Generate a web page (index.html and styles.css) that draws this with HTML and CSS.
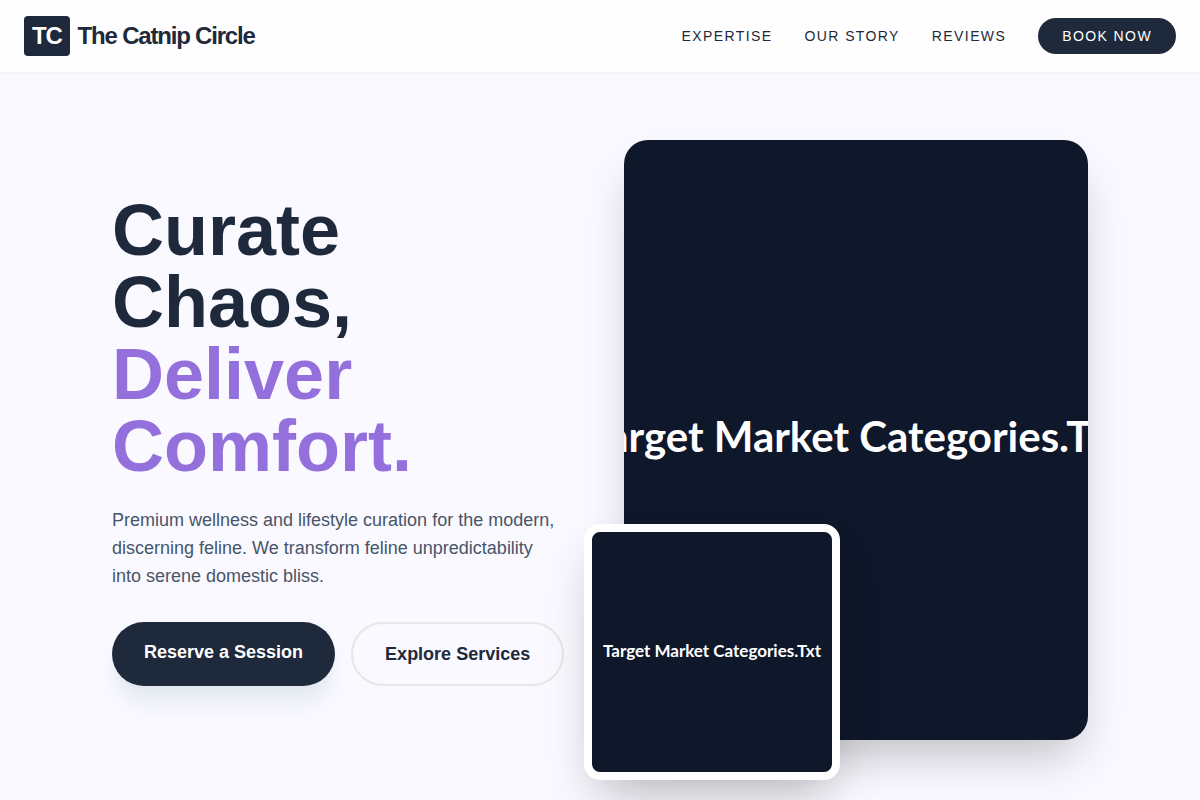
FILE: index.html
```html
<!DOCTYPE html>
<html lang="en">
<head>
<meta charset="utf-8">
<meta name="viewport" content="width=device-width, initial-scale=1">
<title>The Catnip Circle</title>
<link rel="stylesheet" href="styles.css">
</head>
<body>
<header class="site-header">
  <a class="brand" href="#"><span class="brand-mark">TC</span><span>The Catnip Circle</span></a>
  <nav class="site-nav" aria-label="Main">
    <a class="nav-link" href="#expertise">Expertise</a>
    <a class="nav-link" href="#story">Our Story</a>
    <a class="nav-link" href="#reviews">Reviews</a>
    <a class="nav-link nav-cta" href="#book">Book Now</a>
  </nav>
</header>
<main class="hero">
  <div class="hero-grid">
    <section class="hero-copy">
      <h1 class="hero-title">Curate Chaos, <span class="accent">Deliver Comfort.</span></h1>
      <p class="hero-text">Premium wellness and lifestyle curation for the modern, discerning feline. We transform feline unpredictability into serene domestic bliss.</p>
      <div class="actions">
        <a class="button button-primary" href="#book">Reserve a Session</a>
        <a class="button button-outline" href="#expertise">Explore Services</a>
      </div>
    </section>
    <div class="media">
      <div class="media-main"><span>Target Market Categories.Txt</span></div>
      <div class="media-inset"><span>Target Market Categories.Txt</span></div>
    </div>
  </div>
</main>
</body>
</html>
```
FILE: styles.css
```css
*,
*::before,
*::after {
  box-sizing: border-box;
}

body {
  margin: 0;
  background: #faf9ff;
  color: #1e293b;
  font-family: "Liberation Sans", Arial, sans-serif;
  overflow-x: hidden;
}

a {
  color: inherit;
  text-decoration: none;
}

.site-header {
  position: fixed;
  top: 0;
  left: 0;
  right: 0;
  z-index: 10;
  display: flex;
  align-items: center;
  justify-content: space-between;
  padding: 16px 24px;
  background: #fefefe;
  border-bottom: 2px solid #f3f3f8;
}

.brand {
  display: flex;
  align-items: center;
  gap: 8px;
  font-size: 24px;
  font-weight: 700;
  line-height: 32px;
  letter-spacing: -0.05em;
}

.brand-mark {
  padding: 4px 8px;
  border-radius: 4px;
  background: #1e293b;
  color: #fff;
}

.site-nav {
  display: flex;
  align-items: center;
  gap: 32px;
}

.nav-link {
  font-size: 14px;
  line-height: 20px;
  letter-spacing: 0.1em;
  text-transform: uppercase;
}

.nav-cta {
  padding: 8px 24px;
  border-radius: 18px;
  background: #1e293b;
  color: #fff;
}

.hero {
  display: flex;
  align-items: center;
  justify-content: center;
  min-height: 100vh;
  padding: 80px 112px 0;
}

.hero-grid {
  display: grid;
  grid-template-columns: repeat(2, minmax(0, 1fr));
  align-items: center;
  gap: 48px;
  width: 100%;
  max-width: 1232px;
}

.hero-title {
  margin: 0 0 24px;
  font-size: 72px;
  font-weight: 700;
  line-height: 1;
}

.accent {
  color: #9370db;
}

.hero-text {
  max-width: 448px;
  margin: 0 0 32px;
  color: #475569;
  font-size: 18px;
  line-height: 28px;
}

.actions {
  display: flex;
  gap: 16px;
}

.button {
  padding: 16px 32px;
  border-radius: 32px;
  font-size: 18px;
  font-weight: 700;
  line-height: 28px;
  white-space: nowrap;
}

.button-primary {
  background: #1e293b;
  color: #fff;
  box-shadow: 0 20px 25px -5px #e2e8f0, 0 8px 10px -6px #e2e8f0;
}

.button-outline {
  border: 2px solid #e5e7eb;
}

.media {
  position: relative;
}

.media-main,
.media-inset {
  display: flex;
  align-items: center;
  justify-content: center;
  overflow: hidden;
  background: #0f172a;
  box-shadow: 0 25px 50px -12px rgba(0, 0, 0, 0.25);
  color: #fff;
  font-family: Lato, sans-serif;
  font-weight: 700;
  white-space: nowrap;
}

.media-main {
  height: 600px;
  padding-bottom: 8px;
  border-radius: 24px;
  font-size: 42px;
}

.media-inset {
  position: absolute;
  bottom: -40px;
  left: -40px;
  width: 256px;
  height: 256px;
  padding-bottom: 4px;
  border: 8px solid #fff;
  border-radius: 16px;
  font-size: 17px;
}
```
